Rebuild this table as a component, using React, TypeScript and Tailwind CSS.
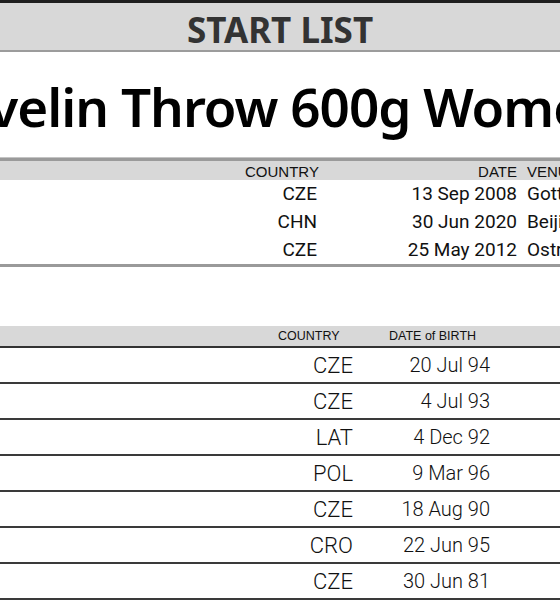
const records = [
    { country: "CZE", date: "13 Sep 2008", venue: "Gottingen" },
    { country: "CHN", date: "30 Jun 2020", venue: "Beijing" },
    { country: "CZE", date: "25 May 2012", venue: "Ostrava" }
]

const athletes = [
    { country: "CZE", born: "20 Jul 94" },
    { country: "CZE", born: "4 Jul 93" },
    { country: "LAT", born: "4 Dec 92" },
    { country: "POL", born: "9 Mar 96" },
    { country: "CZE", born: "18 Aug 90" },
    { country: "CRO", born: "22 Jun 95" },
    { country: "CZE", born: "30 Jun 81" }
]

const headFont = "font-['Liberation_Sans',Arial,sans-serif]"
const dataFont = "font-['Roboto',sans-serif]"

const App = () => {
    return (
        <div className="w-[560px] h-[600px] overflow-hidden bg-white text-[#111]">
            <div className="h-[52px] flex items-center justify-center pt-[5px] bg-[#d8d8d8] border-t-[3px] border-t-[#1e1e1e] border-b-2 border-b-[#9c9c9c]">
                <span className="font-['Noto_Sans',sans-serif] font-bold text-[35px] text-[#333] whitespace-nowrap leading-none">
                    START LIST
                </span>
            </div>

            <div className="h-[106px] flex items-center justify-center border-b border-[#c4c4c4] pt-[4px]">
                <h1 className="font-['Noto_Sans',sans-serif] font-semibold text-[53px] tracking-[-1px] text-black whitespace-nowrap leading-none">
                    Javelin Throw 600g Women
                </h1>
            </div>

            {/* records */}
            <div className="border-b-[3px] border-[#9a9a9a]">
                <div
                    className={`h-[22px] grid grid-cols-[245px_72px_200px_1fr] items-center bg-[#d8d8d8] border-t-[3px] border-[#9a9a9a] text-[15px] text-[#111] ${headFont}`}
                >
                    <div />
                    <div className="text-right">COUNTRY</div>
                    <div className="text-right">DATE</div>
                    <div className="pl-[10px] whitespace-nowrap">VENUE</div>
                </div>
                {records.map((r, i) => (
                    <div
                        key={i}
                        className={`h-[28px] grid grid-cols-[245px_72px_200px_1fr] items-center text-[19px] ${dataFont}`}
                    >
                        <div />
                        <div className="text-right">{r.country}</div>
                        <div className="text-right">{r.date}</div>
                        <div className="pl-[10px] whitespace-nowrap">{r.venue}</div>
                    </div>
                ))}
            </div>

            {/* start list */}
            <div className="mt-[59px]">
                <div
                    className={`h-[22px] grid grid-cols-[278px_75px_137px_1fr] items-center bg-[#d8d8d8] border-b-2 border-[#333] text-[12.5px] text-[#111] ${headFont}`}
                >
                    <div />
                    <div className="whitespace-nowrap">COUNTRY</div>
                    <div className="pl-[36px] whitespace-nowrap">DATE of BIRTH</div>
                    <div />
                </div>
                {athletes.map((a, i) => (
                    <div
                        key={i}
                        className={`h-[36px] grid grid-cols-[278px_75px_137px_1fr] items-center border-b-2 border-[#3a3a3a] font-light ${dataFont}`}
                    >
                        <div />
                        <div className="text-right text-[22px]">{a.country}</div>
                        <div className="text-right text-[20px]">{a.born}</div>
                        <div />
                    </div>
                ))}
            </div>
        </div>
    )
}

export default App
